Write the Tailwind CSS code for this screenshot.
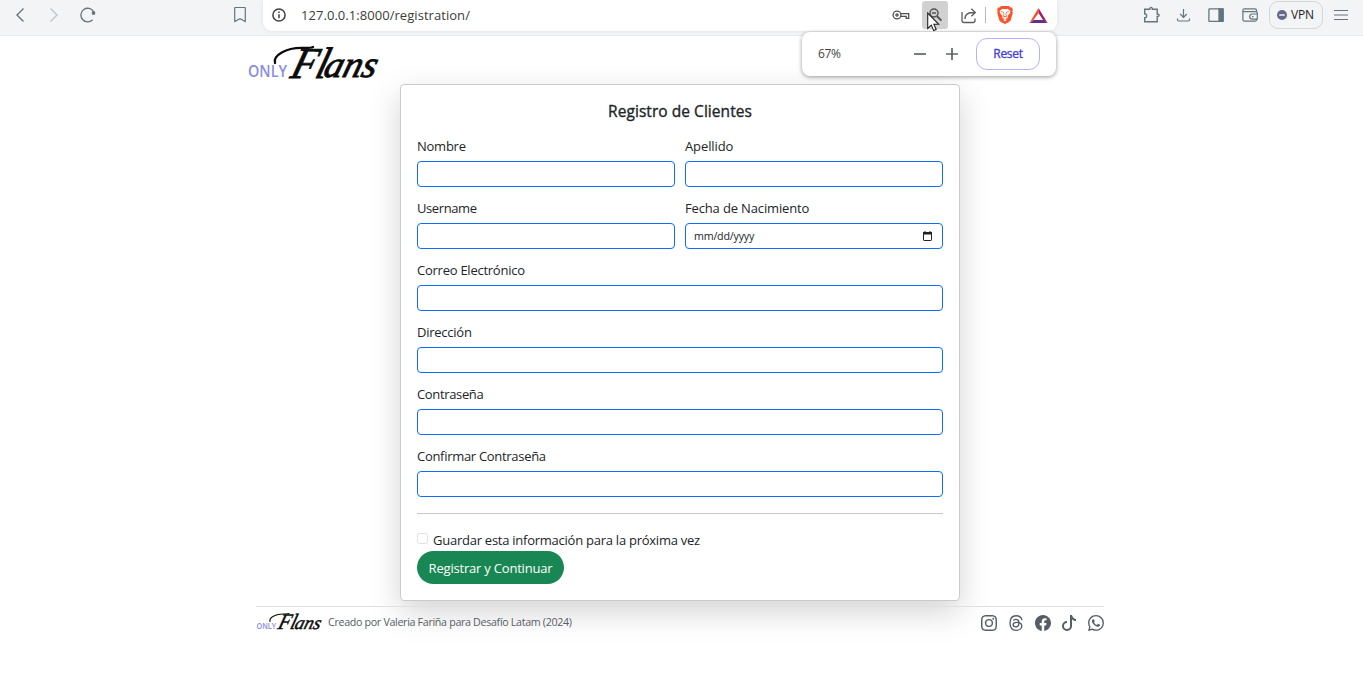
<!DOCTYPE html>
<html lang="es">
<head>
<meta charset="utf-8">
<title>OnlyFlans - Registro</title>
<script src="https://cdn.jsdelivr.net/npm/@tailwindcss/browser@4"></script>
</head>
<body class="h-[682px] overflow-hidden bg-white font-['Open_Sans','Noto_Sans',sans-serif] text-[#212529]">
<header class="relative z-20 flex h-9 items-start border-b border-[#e9ebed] bg-[#f3f4f6] text-[#62757e]">
  <div class="flex h-[30px] w-[263px] items-center pl-3">
    <svg class="size-4" viewBox="0 0 16 16" fill="none" stroke="currentColor" stroke-width="1.4"><path d="M11.5 1.5 5 8l6.500 6.500"/></svg>
    <svg class="ml-[18px] size-4 text-[#bcc6ca]" viewBox="0 0 16 16" fill="none" stroke="currentColor" stroke-width="1.400"><path d="M4.500 1.500 11 8l-6.500 6.500"/></svg>
    <svg class="ml-[18px] size-4" viewBox="0 0 16 16" fill="none" stroke="currentColor" stroke-width="1.300"><path d="M13.600 4.600A6.800 6.800 0 1 0 12.600 12.800"/><circle cx="13.500" cy="6" r="1.900" fill="currentColor" stroke="none"/></svg>
    <svg class="ml-[136px] size-4" viewBox="0 0 16 16" fill="none" stroke="currentColor" stroke-width="1.200"><path d="M2.700 1.200q0-.7.700-.7h9.200q.700 0 .7.700v13.300L8 11.700l-5.300 2.800z"/></svg>
  </div>
  <div class="flex h-[31px] w-[794px] items-center rounded-b-[9px] bg-white pb-px pl-2 shadow-[0_0_4px_rgba(0,0,0,0.08)]">
    <svg class="size-4 text-[#404040]" viewBox="0 0 16 16" fill="none" stroke="currentColor" stroke-width="1.500"><circle cx="8" cy="8" r="6.100"/><path d="M8 7.200v4M8 4.500v1.400"/></svg>
    <span class="ml-[14px] w-[587px] text-[13px] leading-4 tracking-[0.05px] text-[#3b3b3b]">127.0.0.1:8000/registration/</span>
    <svg class="ml-1 h-[18px] w-[18px] text-[#505050]" viewBox="0 0 18 18" fill="none" stroke="currentColor" stroke-width="1.300"><circle cx="5" cy="9" r="3.900"/><circle cx="5" cy="9" r="1.100"/><path d="M8.500 7.700h8.200v4.600h-2.500v-2H8.700"/></svg>
    <span class="relative ml-3 flex size-[26px] h-7 items-center justify-center rounded-[3px] bg-[#d1d1d1] text-[#505050]">
      <svg class="size-4" viewBox="0 0 16 16" fill="none" stroke="currentColor" stroke-width="1.400"><circle cx="7" cy="6" r="4"/><path d="M5 6h4"/><path d="m9.800 9 4.700 4.700" stroke-width="1.800"/></svg>
      <svg class="absolute left-[5px] top-[11px] h-[20px] w-[13px]" viewBox="0 0 13 20"><path d="M.7 1v15.500l3.600-3.400 2.400 5.500 2.500-1.100-2.300-5.200h4.900z" fill="#fff" stroke="#222" stroke-width="1.100"/></svg>
    </span>
    <svg class="ml-3 h-[17px] w-[18px] text-[#5c5c5c]" viewBox="0 0 18 17" fill="none" stroke="currentColor" stroke-width="1.300"><path d="M2 5v8.500q0 2 2 2h9q2 0 2-2v-2M5 12c0-5 3-6.500 10-6.500M11.300 1.700l4 3.800-4 3.800"/></svg>
    <span class="ml-[7px] h-4 w-px bg-[#b9b9b9]"></span>
    <svg class="ml-[11px] h-[18px] w-4" viewBox="0 0 16 18"><path d="M4 0h8l1.400 1.500 1.700.1.700 2.200-.4 1.400.4 1.500-2 7.300Q13 16 8 18 3 16 2.200 14L.2 6.700l.4-1.500-.4-1.400.7-2.200 1.700-.1z" fill="#fb542b"/><path d="M8 3.200 5.500 2.700 2.600 5.100l.4 2 2.400 3-.6 1.600 3.200 1.500 3.200-1.500-.6-1.600 2.400-3 .4-2-2.900-2.400z" fill="#fff"/><path d="m4 5.600 2.500.4.500 2.600-.5 1.500L8 11l1.500-.9L9 8.600 9.500 6l2.500-.4M5.300 11.500 8 10.300l2.700 1.200" fill="none" stroke="#fb542b" stroke-width=".7"/><path d="M6.200 14 8 12.900 9.800 14 8 15.300z" fill="#fff"/></svg>
    <svg class="ml-4 h-[17px] w-[19px]" viewBox="0 0 19 17"><path d="M9.500 1v5L4.500 13 .5 16z" fill="#ff4724"/><path d="M9.500 1 18.500 16l-4.300-2.700L9.500 6z" fill="#9e1f63"/><path d="M.5 16h18l-4.300-3H4.700z" fill="#662d91"/></svg>
  </div>
  <div class="flex h-[30px] flex-1 items-center pl-[86px]">
    <svg class="size-[18px]" viewBox="0 0 18 18" fill="none" stroke="currentColor" stroke-width="1.400"><path d="M1.700 3.300h5.100c-.2-2.500 2.800-2.500 2.600 0h4.800V8c2.500-.2 2.500 2.700 0 2.500v5.300H1.700v-4c2.600.2 2.600-4.200 0-4z"/></svg>
    <svg class="ml-[15px] size-4" viewBox="0 0 16 16" fill="none" stroke="currentColor" stroke-width="1.200"><path d="M7.500 2v8M4.200 7l3.300 3.300L10.800 7M1.500 11.500v1.300q0 1.200 1.200 1.200h9.600q1.200 0 1.200-1.200v-1.300"/></svg>
    <svg class="ml-4 size-4" viewBox="0 0 16 16" fill="none" stroke="currentColor" stroke-width="1.300"><rect x=".9" y="1.800" width="14.200" height="12.600" rx=".6"/><path d="M11 2h4v12.300h-4z" fill="currentColor"/></svg>
    <svg class="ml-[18px] size-4" viewBox="0 0 16 16" fill="none" stroke="currentColor" stroke-width="1.200"><path d="M14.500 5V3.300q0-1.500-1.500-1.500H2.400q-1.500 0-1.500 1.500v9.400q0 1.500 1.500 1.500H13q1.500 0 1.500-1.500V12M1 4.700h13q1.300 0 1.300 1.300v6.200h-5a2.600 2.600 0 0 1 0-5.200h5M10 9.600h1.500"/></svg>
    <div class="ml-[11px] mt-[-1px] flex h-7 w-[54px] items-center rounded-[9px] border border-[#d3d8dc] pl-[7px] text-[#222]">
      <svg class="size-[10px]" viewBox="0 0 10 10"><circle cx="5" cy="5" r="5" fill="#66698e"/><path d="M2.300 5h5.400" stroke="#fff" stroke-width="1.400"/></svg>
      <span class="ml-1 text-[12px] leading-4 tracking-[-0.2px]">VPN</span>
    </div>
    <svg class="ml-[11px] h-4 w-[14px]" viewBox="0 0 14 16" fill="none" stroke="currentColor" stroke-width="1.200"><path d="M0 3.500h14M0 8h14M0 12.500h14"/></svg>
  </div>
  <div class="absolute left-[802px] top-8 flex h-[44px] w-[254px] items-center rounded-[8px] bg-white shadow-[0_1px_4px_rgba(0,0,0,0.4)]">
    <span class="ml-4 w-[96px] text-[12px] tracking-[-0.4px] text-[#444]">67%</span>
    <svg class="h-3 w-3 text-[#5f6368]" viewBox="0 0 12 12"><path d="M0 6h12" stroke="currentColor" stroke-width="1.700"/></svg>
    <svg class="ml-5 h-3 w-3 text-[#5f6368]" viewBox="0 0 12 12"><path d="M0 6h12M6 0v12" stroke="currentColor" stroke-width="1.700"/></svg>
    <button class="ml-[18px] h-8 w-16 rounded-[11px] border border-[#b4b4fa] text-[12px] tracking-[-0.3px] text-[#423ad9] [-webkit-text-stroke:0.3px_#423ad9]">Reset</button>
  </div>
</header>
<main class="relative w-[1360px]">
  <div class="h-12 pl-[248px] pt-2">
    <svg class="h-10 w-[132px] overflow-visible" viewBox="0 0 132 40" role="img" aria-label="OnlyFlans">
      <text x="0" y="33" font-family="Open Sans" font-weight="600" font-size="16" textLength="39" lengthAdjust="spacingAndGlyphs" fill="#8b8de0">ONLY</text>
      <path d="M27 19c-2-7 10-16 30-15 4 0 6 0 8-1" fill="none" stroke="#0b0b0b" stroke-width="2.300" stroke-linecap="round"/>
      <g transform="translate(41 34) skewX(-16)" font-family="Liberation Serif" font-style="italic" fill="#0b0b0b" stroke="#0b0b0b" stroke-width=".9">
        <text x="0" y="0" font-size="44" textLength="36" lengthAdjust="spacingAndGlyphs">Fl</text>
        <text x="33" y="-1" font-size="37" textLength="52" lengthAdjust="spacingAndGlyphs">ans</text>
      </g>
    </svg>
  </div>
  <form class="mx-auto flex h-[517px] w-[560px] flex-col rounded-[4px] border border-[#c9cacb] bg-white px-4 pt-4 shadow-[0_11px_32px_rgba(0,0,0,0.175)]">
    <h1 class="text-center text-[15.500px] leading-[21px] tracking-[0.05px] [-webkit-text-stroke:0.35px_#212529]">Registro de Clientes</h1>
    <div class="mt-[14px] grid grid-cols-2 gap-x-[10px] gap-y-[11px] text-[13px] leading-5 tracking-[-0.25px]">
      <label class="flex flex-col gap-[5px]"><span>Nombre</span><input class="h-[26px] w-full rounded-[4px] border border-[#0d6efd]"></label>
      <label class="flex flex-col gap-[5px]"><span class="tracking-[-0.1px]">Apellido</span><input class="h-[26px] w-full rounded-[4px] border border-[#0d6efd]"></label>
      <label class="flex flex-col gap-[5px]"><span class="tracking-[-0.4px]">Username</span><input class="h-[26px] w-full rounded-[4px] border border-[#0d6efd]"></label>
      <div class="flex flex-col gap-[5px]"><span class="tracking-[-0.15px]">Fecha de Nacimiento</span>
        <div class="flex h-[26px] items-center justify-between rounded-[4px] border border-[#0d6efd] pl-2 pr-[10px] text-[10.700px]"><span class="tracking-[-0.2px]">mm/dd/yyyy</span>
          <svg class="h-[10px] w-[9px]" viewBox="0 0 9 10"><rect x=".5" y="1.500" width="8" height="8" rx=".6" fill="none" stroke="#222"/><path d="M0 1h9v2.500H0zM1.500 0h1v1h-1zM6.500 0h1v1h-1z" fill="#222"/></svg>
        </div></div>
      <label class="col-span-2 flex flex-col gap-[5px]"><span>Correo Electrónico</span><input class="h-[26px] w-full rounded-[4px] border border-[#0d6efd]"></label>
      <label class="col-span-2 flex flex-col gap-[5px]"><span>Dirección</span><input class="h-[26px] w-full rounded-[4px] border border-[#0d6efd]"></label>
      <label class="col-span-2 flex flex-col gap-[5px]"><span class="tracking-[-0.35px]">Contraseña</span><input class="h-[26px] w-full rounded-[4px] border border-[#0d6efd]"></label>
      <label class="col-span-2 flex flex-col gap-[5px]"><span class="tracking-[-0.3px]">Confirmar Contraseña</span><input class="h-[26px] w-full rounded-[4px] border border-[#0d6efd]"></label>
    </div>
    <hr class="mt-4 border-[#c7c8ca]">
    <label class="mt-4 flex h-[21px] text-[13px] leading-[21px] tracking-[-0.25px]"><span class="mt-[2.500px] size-[11px] rounded-[2.500px] border border-[#dee2e6]"></span><span class="ml-[5px]">Guardar esta información para la próxima vez</span></label>
    <button class="h-[33px] w-[147px] rounded-full bg-[#198754] pt-[2px] text-[13px] tracking-[-0.2px] text-white">Registrar y Continuar</button>
  </form>
  <footer class="mx-auto mt-[5px] flex w-[848px] items-center border-t border-[#dee0e2] pt-[5px] text-[#565d64]">
    <svg class="h-5 w-[67px] overflow-visible" viewBox="0 0 132 40" role="img" aria-label="OnlyFlans">
      <text x="0" y="33" font-family="Open Sans" font-weight="600" font-size="16" textLength="39" lengthAdjust="spacingAndGlyphs" fill="#8b8de0">ONLY</text>
      <path d="M27 19c-2-7 10-16 30-15 4 0 6 0 8-1" fill="none" stroke="#0b0b0b" stroke-width="2.300" stroke-linecap="round"/>
      <g transform="translate(41 34) skewX(-16)" font-family="Liberation Serif" font-style="italic" fill="#0b0b0b" stroke="#0b0b0b" stroke-width=".9">
        <text x="0" y="0" font-size="44" textLength="36" lengthAdjust="spacingAndGlyphs">Fl</text>
        <text x="33" y="-1" font-size="37" textLength="52" lengthAdjust="spacingAndGlyphs">ans</text>
      </g>
    </svg>
    <span class="ml-[5px] text-[10.700px] leading-4 tracking-[-0.32px]">Creado por Valeria Fariña para Desafío Latam (2024)</span>
    <div class="ml-auto flex gap-[10.700px] pt-[2px]">
      <svg class="size-4" viewBox="0 0 16 16" fill="currentColor"><path d="M8 0C5.829 0 5.556.01 4.703.048 3.850.088 3.269.222 2.760.420a3.900 3.900 0 0 0-1.417.923A3.900 3.900 0 0 0 .420 2.760C.222 3.268.087 3.850.048 4.700.010 5.555 0 5.827 0 8.001c0 2.172.010 2.444.048 3.297.040.852.174 1.433.372 1.942.205.526.478.972.923 1.417.444.445.890.719 1.416.923.510.198 1.090.333 1.942.372C5.555 15.990 5.827 16 8 16s2.444-.010 3.298-.048c.851-.040 1.434-.174 1.943-.372a3.900 3.900 0 0 0 1.416-.923c.445-.445.718-.891.923-1.417.197-.509.332-1.090.372-1.942C15.990 10.445 16 10.173 16 8s-.010-2.445-.048-3.299c-.040-.851-.175-1.433-.372-1.941a3.900 3.900 0 0 0-.923-1.417A3.900 3.900 0 0 0 13.240.420c-.510-.198-1.092-.333-1.943-.372C10.443.010 10.172 0 7.998 0zm-.717 1.442h.718c2.136 0 2.389.007 3.232.046.780.035 1.204.166 1.486.275.373.145.640.319.920.599s.453.546.598.920c.110.281.240.705.275 1.485.039.843.047 1.096.047 3.231s-.008 2.389-.047 3.232c-.035.780-.166 1.203-.275 1.485a2.500 2.500 0 0 1-.599.919c-.280.280-.546.453-.920.598-.280.110-.704.240-1.485.276-.843.038-1.096.047-3.232.047s-2.390-.009-3.233-.047c-.780-.036-1.203-.166-1.485-.276a2.500 2.500 0 0 1-.920-.598 2.500 2.500 0 0 1-.600-.920c-.109-.281-.240-.705-.275-1.485-.038-.843-.046-1.096-.046-3.233s.008-2.388.046-3.231c.036-.780.166-1.204.276-1.486.145-.373.319-.640.599-.920s.546-.453.920-.598c.282-.110.705-.240 1.485-.276.738-.034 1.024-.044 2.515-.045zm4.988 1.328a.960.960 0 1 0 0 1.920.960.960 0 0 0 0-1.920m-4.270 1.122a4.109 4.109 0 1 0 0 8.217 4.109 4.109 0 0 0 0-8.217m0 1.441a2.667 2.667 0 1 1 0 5.334 2.667 2.667 0 0 1 0-5.334"/></svg>
      <svg class="size-4" viewBox="0 0 16 16" fill="none" stroke="currentColor" stroke-width="1.350"><path d="M14 5C13.300 2 11.300.700 8.100.700 4 .700 2 3.300 2 8s2 7.300 6.100 7.300c3.400 0 5.700-1.900 5.700-4.300 0-2.300-2-3.700-5.200-3.700-2.200 0-3.500.9-3.500 2.400 0 1.300 1.100 2.100 2.700 2.100 2 0 3.100-1.300 3.100-3.800 0-2.400-1-3.700-3-3.700-1.200 0-2 .5-2.500 1.300"/></svg>
      <svg class="size-4" viewBox="0 0 16 16" fill="currentColor"><path d="M16 8.049c0-4.446-3.582-8.050-8-8.050C3.580 0-.002 3.603-.002 8.050c0 4.017 2.926 7.347 6.750 7.951v-5.625h-2.030V8.050H6.750V6.275c0-2.017 1.195-3.131 3.022-3.131.876 0 1.791.157 1.791.157v1.980h-1.009c-.993 0-1.303.621-1.303 1.258v1.510h2.218l-.354 2.326H9.250V16c3.824-.604 6.750-3.934 6.750-7.951"/></svg>
      <svg class="size-4" viewBox="0 0 16 16" fill="currentColor"><path d="M9 0h1.980c.144.715.540 1.617 1.235 2.512C12.895 3.389 13.797 4 15 4v2c-1.753 0-3.070-.814-4-1.829V11a5 5 0 1 1-5-5v2a3 3 0 1 0 3 3z"/></svg>
      <svg class="size-4" viewBox="0 0 16 16" fill="currentColor"><path d="M13.601 2.326A7.850 7.850 0 0 0 7.994 0C3.627 0 .068 3.558.064 7.926c0 1.399.366 2.760 1.057 3.965L0 16l4.204-1.102a7.900 7.900 0 0 0 3.790.965h.004c4.368 0 7.926-3.558 7.930-7.930A7.900 7.900 0 0 0 13.600 2.326zM7.994 14.521a6.600 6.600 0 0 1-3.356-.920l-.240-.144-2.494.654.666-2.433-.156-.251a6.560 6.560 0 0 1-1.007-3.505c0-3.626 2.957-6.584 6.591-6.584a6.560 6.560 0 0 1 4.660 1.931 6.560 6.560 0 0 1 1.928 4.660c-.004 3.639-2.961 6.592-6.592 6.592m3.615-4.934c-.197-.099-1.170-.578-1.353-.646-.182-.065-.315-.099-.445.099-.133.197-.513.646-.627.775-.114.133-.232.148-.430.050-.197-.100-.836-.308-1.592-.985-.590-.525-.985-1.175-1.103-1.372-.114-.198-.011-.304.088-.403.087-.088.197-.232.296-.346.100-.114.133-.198.198-.330.065-.134.034-.248-.015-.347-.050-.099-.445-1.076-.612-1.470-.160-.389-.323-.335-.445-.340-.114-.007-.247-.007-.380-.007a.730.730 0 0 0-.529.247c-.182.198-.691.677-.691 1.654s.710 1.916.810 2.049c.098.133 1.394 2.132 3.383 2.992.470.205.840.326 1.129.418.475.152.904.129 1.246.080.380-.058 1.171-.480 1.338-.943.164-.464.164-.860.114-.943-.049-.084-.182-.133-.380-.232"/></svg>
    </div>
  </footer>
</main>
</body>
</html>
